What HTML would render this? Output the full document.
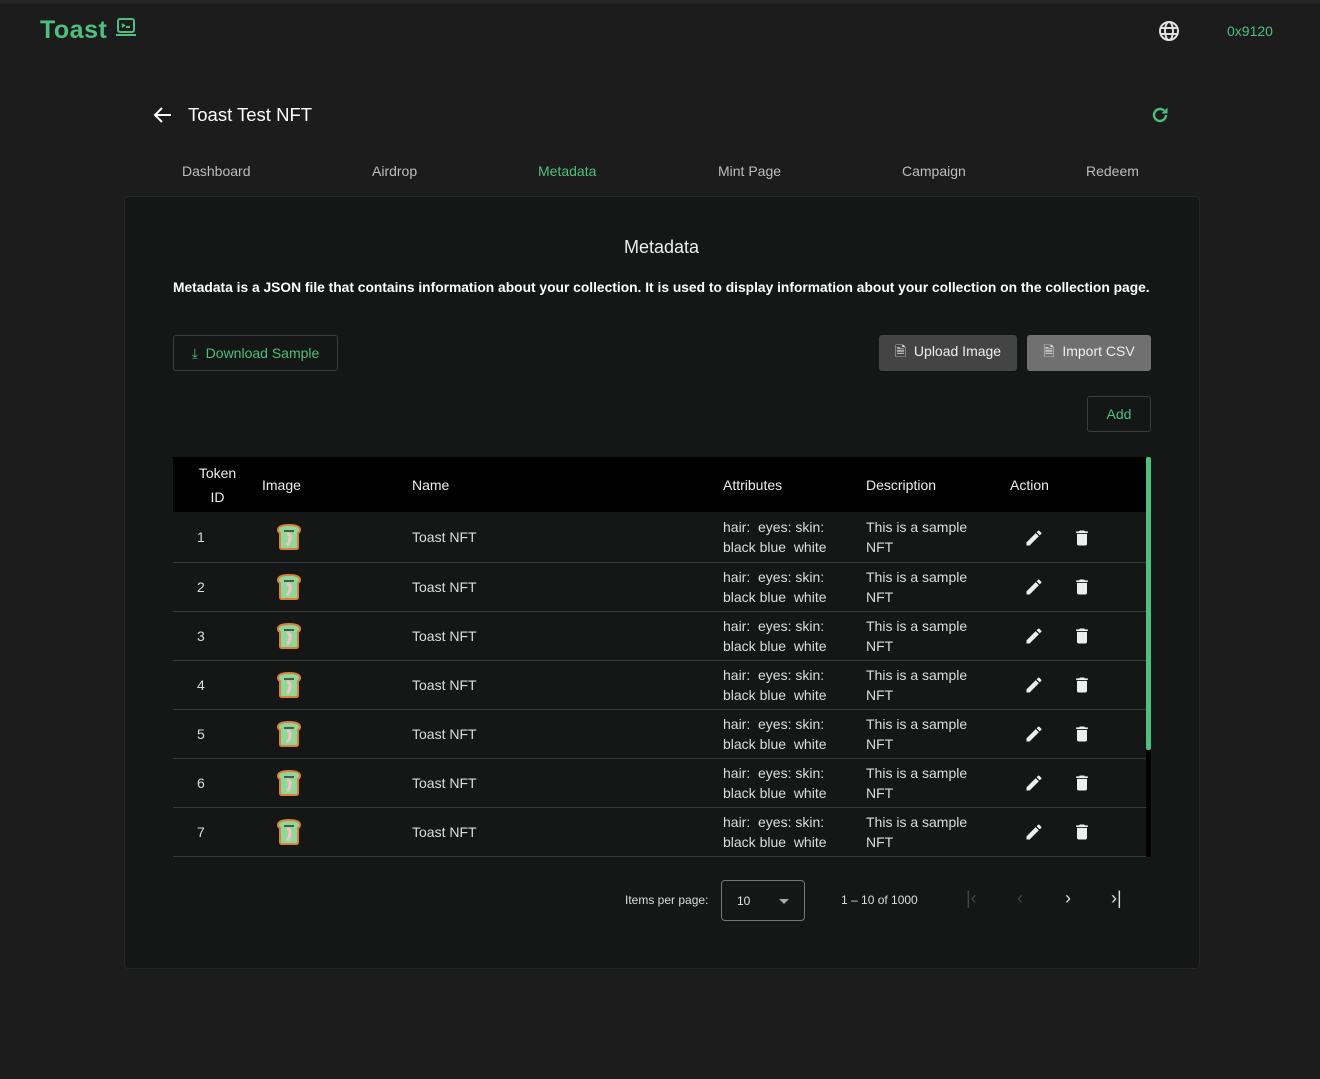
<!DOCTYPE html>
<html><head><meta charset="utf-8"><style>
*{box-sizing:border-box;margin:0;padding:0}
body{width:1320px;height:1079px;background:#1c1c1c;font-family:"Liberation Sans",sans-serif;color:#e6e6e6;position:relative;overflow:hidden}
.topbar{position:absolute;left:0;top:0;width:1320px;height:3px;background:#262729}
.abs{position:absolute}
.logo{left:40px;top:16px;font-size:25px;font-weight:bold;color:#4fbf80;letter-spacing:0.5px}
.tab{position:absolute;top:163px;font-size:14px;color:#bdbdbd}
.green{color:#4fbf80 !important}
.card{left:124px;top:196px;width:1076px;height:773px;background:#151616;border:1px solid #262626;border-radius:4px}
.btn{position:absolute;height:36px;border-radius:3px;font-size:14px;display:flex;align-items:center;justify-content:center}
table{border-collapse:collapse;position:absolute;left:173px;top:457px;width:973px;font-size:14px}
th{background:#000;height:55px;font-weight:normal;text-align:left;color:#eee;padding:0}
td{height:49px;border-bottom:1px solid #3a3a3a;padding:0;color:#ddd;line-height:20px;vertical-align:middle}
</style></head><body>
<div class="topbar"></div>
<div class="abs logo">Toast <svg width="22" height="20" viewBox="0 0 22 20" style="vertical-align:1px"><rect x="3" y="2" width="16" height="13" rx="2" fill="none" stroke="#4fbf80" stroke-width="2"/><path d="M7 7l2 1.5-2 1.5M11 10h4M1 18h20" stroke="#4fbf80" stroke-width="2" fill="none"/></svg></div>
<svg class="abs" style="left:1158px;top:20px" width="22" height="22" viewBox="0 0 22 22" fill="none" stroke="#e0e0e0" stroke-width="2"><circle cx="11" cy="11" r="9"/><ellipse cx="11" cy="11" rx="4" ry="9"/><path d="M2 8h18M2 14h18"/></svg>
<div class="abs green" style="left:1227px;top:23px;font-size:14px">0x9120</div>
<svg class="abs" style="left:153px;top:105px" width="20" height="20" viewBox="0 0 20 20" fill="none" stroke="#fff" stroke-width="2"><path d="M18 10H3M9 3l-7 7 7 7"/></svg>
<div class="abs" style="left:188px;top:104px;font-size:18.5px;color:#fff">Toast Test NFT</div>
<svg class="abs" style="left:1150px;top:105px" width="20" height="20" viewBox="0 0 20 20" fill="none" stroke="#4fbf80" stroke-width="2.4"><path d="M16 10a6 6 0 1 1-2-4.5"/><path d="M17.5 2.5v6h-6z" fill="#4fbf80" stroke="none"/></svg>
<div class="tab" style="left:182px">Dashboard</div>
<div class="tab" style="left:372px">Airdrop</div>
<div class="tab green" style="left:538px">Metadata</div>
<div class="tab" style="left:718px">Mint Page</div>
<div class="tab" style="left:902px">Campaign</div>
<div class="tab" style="left:1086px">Redeem</div>
<div class="abs card"></div>
<div class="abs" style="left:0;width:1323px;top:237px;text-align:center;font-size:18px;color:#eee">Metadata</div>
<div class="abs" style="left:173px;top:280px;font-size:13.8px;font-weight:bold;color:#fff">Metadata is a JSON file that contains information about your collection. It is used to display information about your collection on the collection page.</div>
<div class="btn green" style="left:173px;top:335px;width:165px;border:1px solid #3c3c3c">⤓&nbsp; Download Sample</div>
<div class="btn" style="left:879px;top:335px;width:138px;background:#444;color:#eee">🗎&nbsp; Upload Image</div>
<div class="btn" style="left:1027px;top:335px;width:124px;background:#707070;color:#eee">🗎&nbsp; Import CSV</div>
<div class="btn green" style="left:1087px;top:396px;width:64px;border:1px solid #3c3c3c">Add</div>
<table>
<tr><th style="width:89px;text-align:center;line-height:24px">Token<br>ID</th><th style="width:150px">Image</th><th style="width:311px">Name</th><th style="width:143px">Attributes</th><th style="width:144px">Description</th><th>Action</th></tr>
</table>
<div id="rows"></div>
<div class="abs" style="left:1146px;top:457px;width:5px;height:400px;background:#000"></div>
<div class="abs" style="left:1146px;top:457px;width:5px;height:293px;background:#4fbf80;border-radius:2px"></div>
<div class="abs" style="left:625px;top:893px;font-size:12px;color:#ddd">Items per page:</div>
<div class="abs" style="left:721px;top:880px;width:84px;height:41px;border:1px solid #777;border-radius:4px;font-size:12px;padding:13px 15px">10<span style="position:absolute;right:15px;top:18px;border:5px solid transparent;border-top-color:#aaa;border-bottom:0"></span></div>
<div class="abs" style="left:841px;top:893px;font-size:12px;color:#ddd">1 – 10 of 1000</div>
<div class="abs" style="left:966px;top:888px;font-size:18px;color:#444">|‹</div>
<div class="abs" style="left:1017px;top:888px;font-size:18px;color:#444">‹</div>
<div class="abs" style="left:1065px;top:888px;font-size:18px;color:#ddd">›</div>
<div class="abs" style="left:1111px;top:888px;font-size:18px;color:#ddd">›|</div>
<script>
var h='<table style="top:513px">';
for(var i=1;i<=7;i++){h+='<tr><td style="width:89px;height:48px;padding-left:24px">'+i+'</td><td style="width:150px"><svg width="30" height="30" viewBox="0 0 30 30" style="margin-left:12px;vertical-align:middle"><path d="M4 8q0-5 11-5t11 5q0 2-2 3v14q0 2-2 2H8q-2 0-2-2V11q-2-1-2-3z" fill="#8fd89a" stroke="#d9813d" stroke-width="2"/><path d="M13 12q4 0 3 5t-3 6" stroke="#f3c4c4" stroke-width="3" fill="none"/><path d="M10 9h10" stroke="#333" stroke-width="1.5"/></svg></td><td style="width:311px">Toast NFT</td><td style="width:143px">hair:&nbsp; eyes: skin:<br>black blue&nbsp; white</td><td style="width:144px">This is a sample<br>NFT</td><td><svg width="20" height="20" viewBox="0 0 24 24" style="margin-left:14px;vertical-align:middle"><path fill="#eee" d="M3 17.25V21h3.75L17.81 9.94l-3.75-3.75L3 17.25zM20.71 7.04a1 1 0 0 0 0-1.41l-2.34-2.34a1 1 0 0 0-1.41 0l-1.83 1.83 3.75 3.75 1.83-1.83z"/></svg><svg width="20" height="20" viewBox="0 0 24 24" style="margin-left:28px;vertical-align:middle"><path fill="#eee" d="M6 19c0 1.1.9 2 2 2h8c1.1 0 2-.9 2-2V7H6v12zM19 4h-3.5l-1-1h-5l-1 1H5v2h14V4z"/></svg></td></tr>';}
document.getElementById('rows').innerHTML=h+'</table>';
</script>
</body></html>
